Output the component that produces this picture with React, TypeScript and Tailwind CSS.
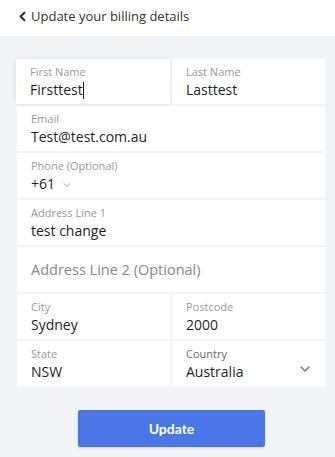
import { ChevronLeft, ChevronDown } from 'lucide-react';

function Field({ label, value, className = '' }: { label: string; value: string; className?: string }) {
  return (
    <div className={`bg-white h-[45px] pl-[14px] pt-[6px] ${className}`}>
      <div className="text-[11px] leading-[14px] text-[#9a9a9a]">{label}</div>
      <div className="text-[14px] leading-[20px] text-[#1f1f1f] mt-[1px]">{value}</div>
    </div>
  );
}

export default function App() {
  return (
    <div className="w-[335px] h-[457px] bg-[#f3f4f8] font-['Open_Sans',sans-serif] overflow-hidden">
      <div className="h-[36px] bg-white flex items-center pl-[15px] shadow-[0_1px_2px_rgba(0,0,0,0.04)]">
        <ChevronLeft size={15} strokeWidth={3.5} className="text-[#333] -mt-[3px]" />
        <span className="ml-[1px] text-[13px] text-[#333] -mt-[3px]">Update your billing details</span>
      </div>

      <div className="mt-[23px] ml-[17px] mr-[10px] flex flex-col gap-[2px]">
        <div className="grid grid-cols-2 gap-[2px]">
          <div className="bg-white h-[45px] pl-[14px] pt-[6px] -ml-[1px] shadow-[0_0_6px_rgba(0,0,0,0.08)] relative z-10">
            <div className="text-[11px] leading-[14px] text-[#9a9a9a]">First Name</div>
            <div className="text-[14px] leading-[20px] text-[#1f1f1f] mt-[1px] flex items-center">
              Firsttest<span className="inline-block w-[1px] h-[17px] bg-[#222]" />
            </div>
          </div>
          <Field label="Last Name" value="Lasttest" />
        </div>
        <Field label="Email" value="Test@test.com.au" />
        <div className="bg-white h-[45px] pl-[14px] pt-[6px]">
          <div className="text-[11px] leading-[14px] text-[#9a9a9a]">Phone (Optional)</div>
          <div className="text-[14px] leading-[20px] text-[#1f1f1f] mt-[1px] flex items-center">
            +61
            <ChevronDown size={12} strokeWidth={1.5} className="ml-[6px] mt-[2px] text-[#888]" />
          </div>
        </div>
        <Field label="Address Line 1" value="test change" />
        <div className="bg-white h-[45px] pl-[14px] flex items-center">
          <span className="text-[14.5px] text-[#8a8a8a]">Address Line 2 (Optional)</span>
        </div>
        <div className="grid grid-cols-2 gap-[2px]">
          <Field label="City" value="Sydney" />
          <Field label="Postcode" value="2000" />
        </div>
        <div className="grid grid-cols-2 gap-[2px]">
          <Field label="State" value="NSW" />
          <div className="bg-white h-[45px] pl-[14px] pt-[6px] flex justify-between">
            <div>
              <div className="text-[11px] leading-[14px] text-[#6a6a6a]">Country</div>
              <div className="text-[14px] leading-[20px] text-[#1f1f1f] mt-[1px]">Australia</div>
            </div>
            <ChevronDown size={16} strokeWidth={2} className="text-[#777] mr-[12px] mt-[14px]" />
          </div>
        </div>
      </div>

      <div className="flex mt-[24px] ml-[78px]">
        <button className="w-[187px] h-[37px] rounded-[2px] bg-[#4a76e6] text-white text-[14px] font-bold font-['Lato',sans-serif] shadow-[0_1px_3px_rgba(0,0,0,0.15)]">
          Update
        </button>
      </div>
    </div>
  );
}
